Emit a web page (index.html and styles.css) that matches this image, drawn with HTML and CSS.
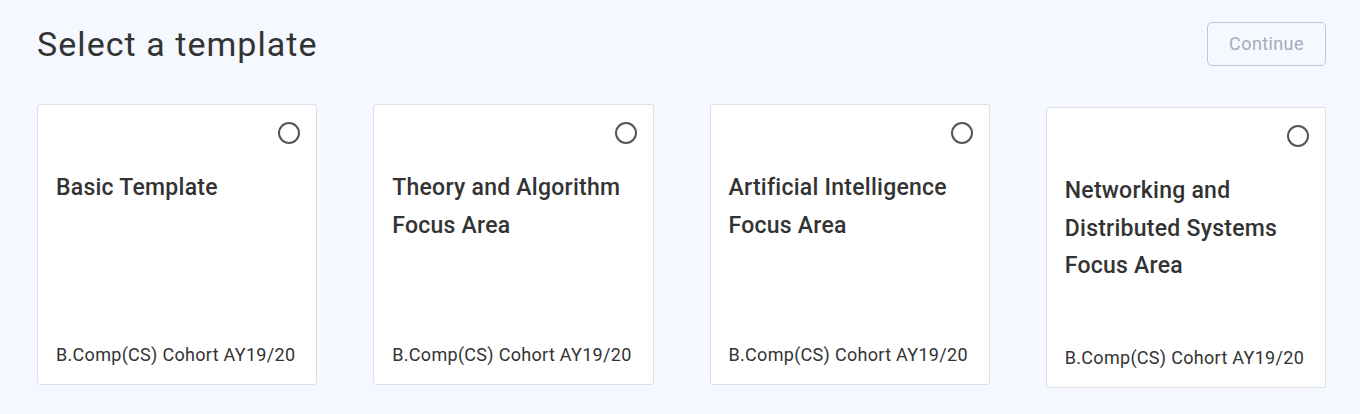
FILE: index.html
```html
<!DOCTYPE html>
<html lang="en">
<head>
<meta charset="utf-8">
<title>Select a template</title>
<link rel="stylesheet" href="styles.css">
</head>
<body>
<div class="page">
  <header class="header">
    <h1 class="title">Select a template</h1>
    <button class="btn-continue" disabled>Continue</button>
  </header>
  <div class="grid">
    <div class="card">
      <span class="radio"></span>
      <div class="card-title">Basic Template</div>
      <div class="card-foot">B.Comp(CS) Cohort AY19/20</div>
    </div>
    <div class="card">
      <span class="radio"></span>
      <div class="card-title">Theory and Algorithm Focus Area</div>
      <div class="card-foot">B.Comp(CS) Cohort AY19/20</div>
    </div>
    <div class="card">
      <span class="radio"></span>
      <div class="card-title">Artificial Intelligence Focus Area</div>
      <div class="card-foot">B.Comp(CS) Cohort AY19/20</div>
    </div>
    <div class="card card-shift">
      <span class="radio"></span>
      <div class="card-title">Networking and Distributed Systems Focus Area</div>
      <div class="card-foot">B.Comp(CS) Cohort AY19/20</div>
    </div>
  </div>
</div>
</body>
</html>
```
FILE: styles.css
```css
html, body {
  margin: 0;
  padding: 0;
  background: #f5f8fe;
  font-family: Roboto, "Liberation Sans", sans-serif;
  color: #333;
}
.page {
  padding: 22px 34px 0 37px;
}
.header {
  display: flex;
  justify-content: space-between;
  align-items: flex-start;
  height: 82px;
}
.title {
  margin: 0;
  font-size: 34px;
  font-weight: 400;
  letter-spacing: 1.05px;
  line-height: 44px;
  color: #333;
}
.btn-continue {
  width: 119px;
  height: 44px;
  border: 1px solid #c3c6d3;
  border-radius: 5px;
  background: transparent;
  color: #a8abbb;
  font-family: Roboto, "Liberation Sans", sans-serif;
  font-size: 18px;
  letter-spacing: 0.4px;
  padding: 0 0 2px;
}
.grid {
  display: grid;
  grid-template-columns: repeat(4, 1fr);
  column-gap: 56px;
  align-items: start;
}
.card {
  position: relative;
  box-sizing: border-box;
  height: 281px;
  background: #fff;
  border: 1px solid #dcdfe6;
  border-radius: 3px;
  padding: 64px 12px 0 18px;
  display: flex;
  flex-direction: column;
}
.card-shift {
  margin-top: 3px;
}
.radio {
  position: absolute;
  top: 17px;
  right: 16px;
  width: 18px;
  height: 18px;
  border: 2px solid #555;
  border-radius: 50%;
}
.card-title {
  font-size: 23px;
  font-weight: 500;
  letter-spacing: 0.25px;
  line-height: 37.5px;
  color: #333;
}
.card-foot {
  margin-top: auto;
  margin-bottom: 17px;
  font-size: 18px;
  letter-spacing: 0.3px;
  line-height: 24px;
  color: #333;
}
```
